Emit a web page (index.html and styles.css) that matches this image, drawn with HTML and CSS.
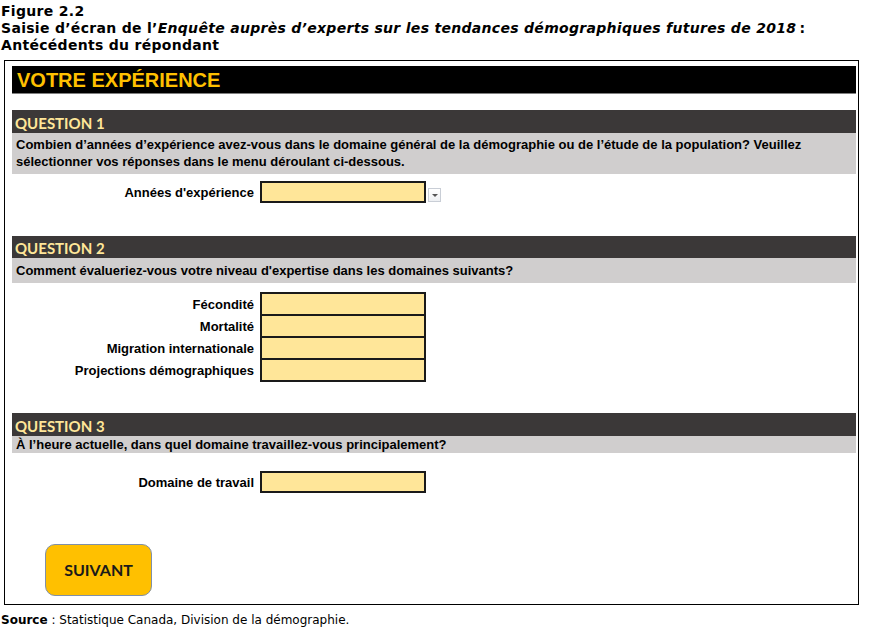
FILE: index.html
```html
<!DOCTYPE html>
<html lang="fr">
<head>
    <meta charset="UTF-8">
    <meta name="viewport" content="width=device-width, initial-scale=1.0">
    <title>Votre expérience</title>
    <link rel="stylesheet" href="styles.css">
</head>
<body>
    <div class="caption">
        <div>Figure 2.2</div>
        <div>Saisie d’écran de l’<em>Enquête auprès d’experts sur les tendances démographiques futures de 2018</em>&#8239;:</div>
        <div>Antécédents du répondant</div>
    </div>

    <div class="frame">
        <div class="banner">VOTRE EXPÉRIENCE</div>

        <!-- Question 1 -->
        <div class="question q1">
            <div class="q-title">QUESTION 1</div>
            <div class="q-text">Combien d’années d’expérience avez-vous dans le domaine général de la démographie ou de l’étude de la population? Veuillez sélectionner vos réponses dans le menu déroulant ci-dessous.</div>
        </div>
        <div class="fields fields-1">
            <div class="row">
                <label>Années d'expérience</label>
                <div class="cell"></div>
                <div class="drop"><span></span></div>
            </div>
        </div>

        <!-- Question 2 -->
        <div class="question q2">
            <div class="q-title">QUESTION 2</div>
            <div class="q-text">Comment évalueriez-vous votre niveau d'expertise dans les domaines suivants?</div>
        </div>
        <div class="fields fields-2">
            <div class="row"><label>Fécondité</label><div class="cell"></div></div>
            <div class="row"><label>Mortalité</label><div class="cell"></div></div>
            <div class="row"><label>Migration internationale</label><div class="cell"></div></div>
            <div class="row"><label>Projections démographiques</label><div class="cell"></div></div>
        </div>

        <!-- Question 3 -->
        <div class="question q3">
            <div class="q-title">QUESTION 3</div>
            <div class="q-text">À l’heure actuelle, dans quel domaine travaillez-vous principalement?</div>
        </div>
        <div class="fields fields-3">
            <div class="row"><label>Domaine de travail</label><div class="cell"></div></div>
        </div>

        <button class="next">SUIVANT</button>
    </div>

    <p class="source"><strong>Source</strong>&nbsp;: Statistique Canada, Division de la démographie.</p>
</body>
</html>
```

FILE: styles.css
```css
body {
    margin: 0;
    font-family: "DejaVu Sans", Verdana, sans-serif;
    color: #000;
    background: #fff;
}
.caption {
    padding: 3px 0 0 1px;
    font-size: 14px;
    font-weight: bold;
    letter-spacing: 0.3px;
    line-height: 17px;
}
.caption em {
    font-style: italic;
}
.frame {
    width: 844px;
    margin: 6px 0 0 4px;
    padding: 5px 2px 8px 7px;
    border: 1px solid #000;
    font-family: "Liberation Sans", Arial, sans-serif;
}
.banner {
    height: 28px;
    line-height: 29px;
    padding-left: 5px;
    background: #000;
    border-bottom: 1px solid #7f7f7f;
    box-sizing: border-box;
    color: #ffc000;
    font-size: 20px;
    font-weight: bold;
}
.question {
    margin-top: 16px;
}
.q-title {
    height: 23px;
    line-height: 26px;
    padding-left: 3px;
    background: #3b3838;
    color: #ffe699;
    font-family: Lato, "Open Sans", sans-serif;
    font-size: 15px;
    font-weight: bold;
}
.q-text {
    padding: 3px 4px 4px 4px;
    background: #d0cece;
    font-size: 13px;
    font-weight: bold;
    line-height: 17px;
}
.q2 {
    margin-top: 33px;
}
.q3 {
    margin-top: 31px;
}
.q2 .q-title {
    height: 22px;
    line-height: 25px;
}
.q2 .q-text {
    padding: 4px 4px 4px 4px;
}
.q3 .q-text {
    padding: 0 4px;
}
.fields-1 {
    margin-top: 7px;
}
.fields-2 {
    margin-top: 9px;
}
.fields-3 {
    margin-top: 18px;
}
.row {
    display: flex;
    align-items: center;
    gap: 6px;
}
.row + .row {
    margin-top: -2px;
}
.row label {
    width: 242px;
    text-align: right;
    font-size: 13px;
    font-weight: bold;
}
.cell {
    width: 166px;
    height: 24px;
    box-sizing: border-box;
    background: #ffe699;
    border: 2px solid #1a1a1a;
}
.fields-1 .cell,
.fields-3 .cell {
    height: 22px;
}
.drop {
    width: 13px;
    height: 14px;
    margin: 5px 0 0 -4px;
    box-sizing: border-box;
    border: 1px solid #c9ced6;
    background: linear-gradient(#ffffff, #eef0f3);
    display: flex;
    align-items: center;
    justify-content: center;
}
.drop span {
    width: 0;
    height: 0;
    border-left: 3px solid transparent;
    border-right: 3px solid transparent;
    border-top: 3px solid #555;
    margin-top: 1px;
}
.next {
    display: block;
    width: 107px;
    height: 52px;
    margin: 51px 0 0 33px;
    padding-bottom: 3px;
    background: #ffc000;
    border: 1px solid #8090a8;
    border-radius: 10px;
    color: #1a1a1a;
    font-family: Lato, "Open Sans", sans-serif;
    font-size: 16px;
    font-weight: bold;
    cursor: pointer;
}
.source {
    margin: 7px 0 0 1px;
    font-size: 12px;
    line-height: 16px;
}
```
